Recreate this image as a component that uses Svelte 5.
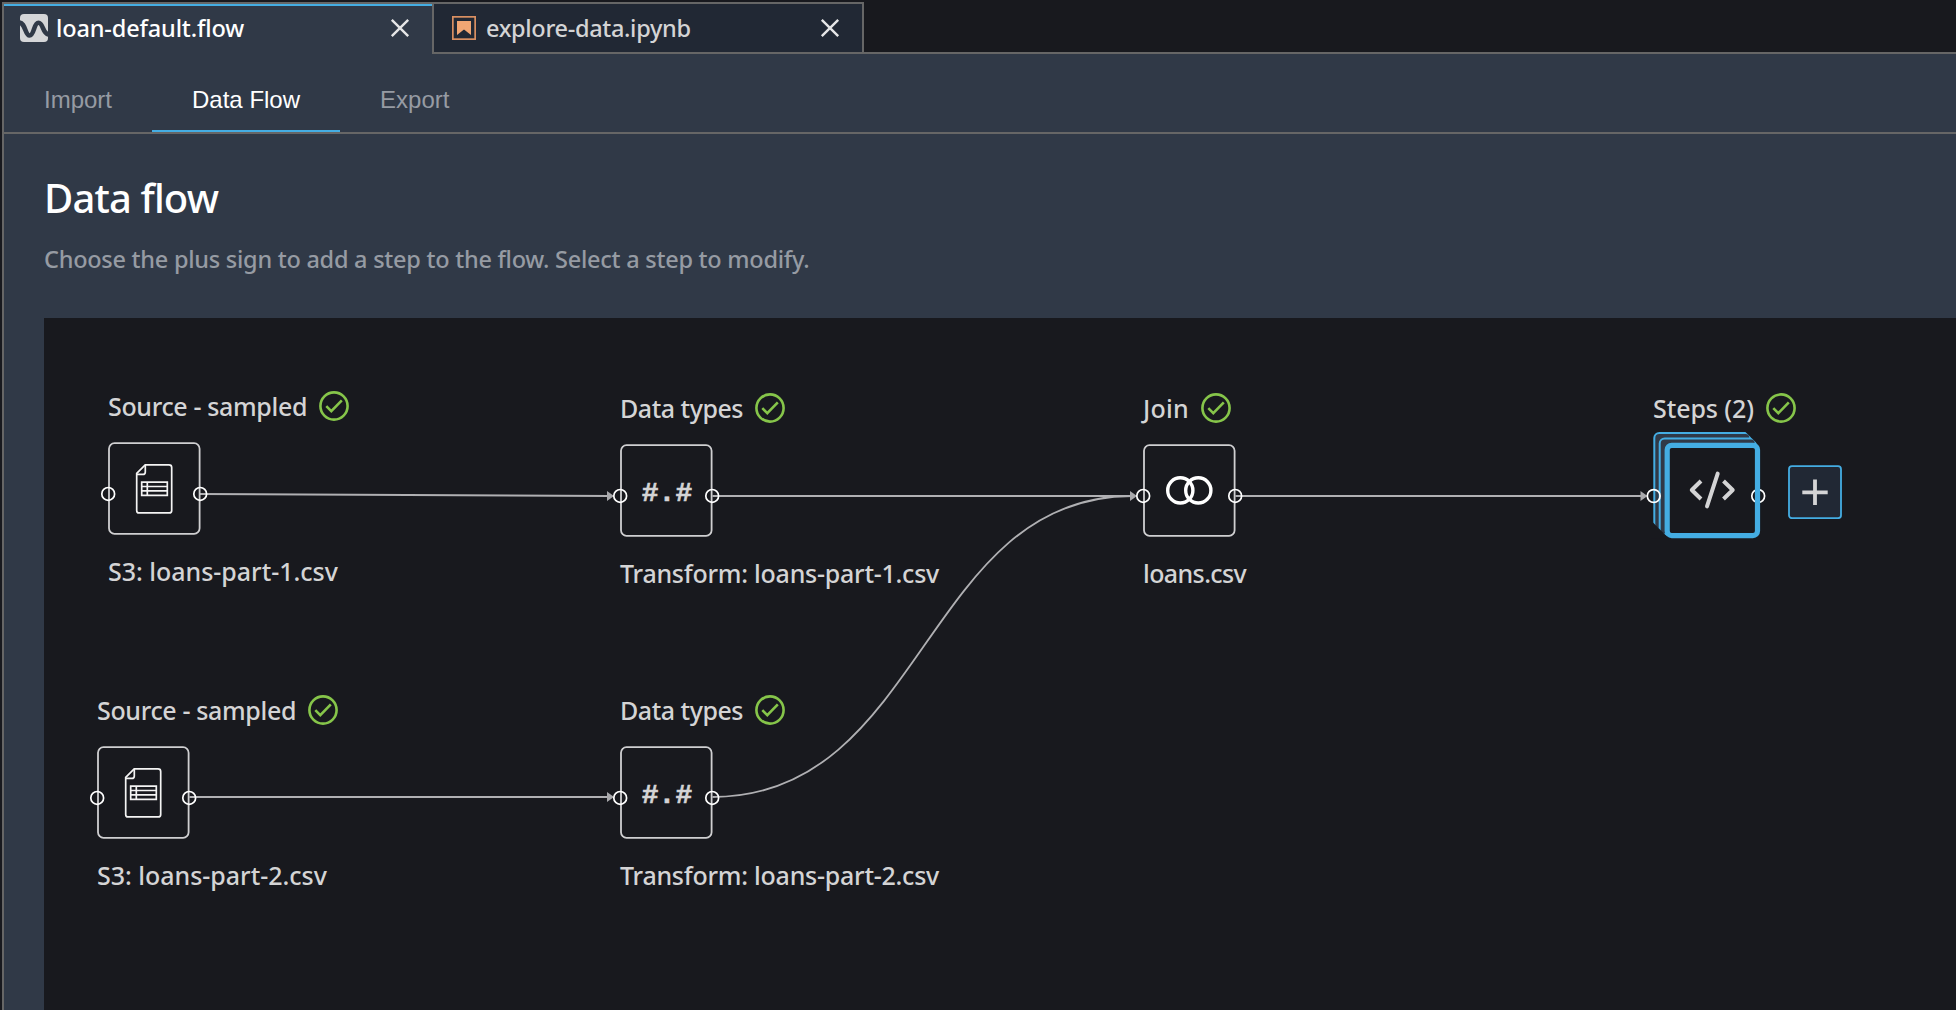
<script>
  // Node positions are the top-left corner of each node's box on the canvas.
  const nodes = [
    { x: 64, y: 124, kind: 'source', title: 'Source - sampled', ts: -0.35, caption: 'S3: loans-part-1.csv', cs: -0.02 },
    { x: 576, y: 126, kind: 'types', title: 'Data types', ts: -0.47, caption: 'Transform: loans-part-1.csv', cs: -0.245 },
    { x: 1099, y: 126, kind: 'join', title: 'Join', ts: 0.25, caption: 'loans.csv', cs: -0.6 },
    { x: 1609, y: 126, kind: 'steps', title: 'Steps (2)', ts: -0.08, caption: '', cs: 0 },
    { x: 53, y: 428, kind: 'source', title: 'Source - sampled', ts: -0.35, caption: 'S3: loans-part-2.csv', cs: -0.02 },
    { x: 576, y: 428, kind: 'types', title: 'Data types', ts: -0.47, caption: 'Transform: loans-part-2.csv', cs: -0.245 }
  ];
  const edges = [
    'M156 176L566 178',
    'M668.5 178H1088',
    'M668.5 479C880 479 880 178 1088 178',
    'M1191.5 178H1598',
    'M145.5 479H566'
  ];
  const arrows = [[570, 178], [1093, 178], [1603.5, 178], [570, 479]];
  const tabs = ['Import', 'Data Flow', 'Export'];
</script>

{#snippet close()}
  <svg class="close" width="20" height="20" viewBox="0 0 20 20"><path d="M1.8 1.8L18.2 18.2M18.2 1.8L1.8 18.2" /></svg>
{/snippet}

<div class="app">
  <header class="files">
    <div class="file active">
      <svg width="28" height="28" viewBox="0 0 28 28">
        <rect width="28" height="28" rx="4" fill="#d5d6d8" />
        <path d="M-1 8.5C5.5 8.5 5 21.5 9.5 21.5C14.5 21.5 13.5 8.8 18.5 8.8C23.5 8.8 22.5 20.5 29 20.5" fill="none" stroke="#303947" stroke-width="4.6" />
      </svg>
      <span class="name flow">loan-default.flow</span>
      {@render close()}
    </div>
    <div class="file">
      <svg class="nb" width="24" height="24" viewBox="0 0 24 24">
        <rect x="0.8" y="0.8" width="22.4" height="22.4" fill="none" stroke="#d98f62" stroke-width="1.8" />
        <path d="M5 5H19V19L12 13.5L5 19Z" fill="#f2a673" />
      </svg>
      <span class="name note">explore-data.ipynb</span>
      {@render close()}
    </div>
    <div class="rest"></div>
  </header>

  <main>
    <nav>
      {#each tabs as tab}
        <button class:selected={tab === 'Data Flow'}>{tab}</button>
      {/each}
    </nav>
    <h1>Data flow</h1>
    <p>Choose the plus sign to add a step to the flow. Select a step to modify.</p>

    <section class="canvas">
      <svg class="edges" width="1912" height="692" viewBox="0 0 1912 692">
        {#each edges as d}<path {d} />{/each}
        {#each arrows as [x, y]}<path class="head" d="M{x} {y}l-7 -5v10z" />{/each}
      </svg>

      {#each nodes as n}
        <div class="node" style:left="{n.x}px" style:top="{n.y - 52}px">
          <div class="title">
            <span style:letter-spacing="{n.ts}px">{n.title}</span>
            <svg class="check" width="30" height="30" viewBox="0 0 30 30">
              <circle cx="15" cy="15" r="13.6" /><path d="M7.3 15.2L12.3 20.2L22.8 9.3" />
            </svg>
          </div>

          <svg class="box {n.kind}" width="92" height="92" viewBox="0 0 92 92">
            {#if n.kind === 'steps'}
              <rect class="layer" x="1.3" y="-11" width="96" height="96" rx="5" />
              <rect class="layer" x="6.7" y="-5.5" width="96" height="96" rx="5" />
              <path class="mask" d="M90.5 -14L112 7.5V-14ZM-2 76.5L16 94.5H-2Z" />
              <rect class="fill" x="14" y="1" width="90" height="90" rx="4" />
              <circle class="port" cx="0.7" cy="52" r="6.4" />
              <circle class="port" cx="105.2" cy="52" r="6.4" />
              <rect class="front" x="14.2" y="1.3" width="90.3" height="90.3" rx="4.5" />
              <path class="code" d="M48 37L38.8 46L48 55M70.5 37L79.7 46L70.5 55" />
              <path class="code round" d="M64.7 29.6L54 62.4" />
            {:else}
              <rect class="frame" x="1" y="1.2" width="90.6" height="90.6" rx="5.5" />
              {#if n.kind === 'source'}
                <g class="doc">
                  <path d="M37.2 22.9H61Q63.7 22.9 63.7 25.4V68.4Q63.7 70.9 61.2 70.9H31Q28.7 70.9 28.7 68.4V31.4Z" />
                  <path d="M37.3 22.9V29.9Q37.3 32.4 34.8 32.4H28.7" />
                  <path d="M33.7 40.1H59.3V53.4H33.7ZM33.7 44.5H59.3M33.7 48.9H59.3M39.3 40.1V53.4" />
                </g>
              {:else if n.kind === 'types'}
                <text x="47" y="56.7" text-anchor="middle">#.#</text>
              {:else}
                <circle class="ring" cx="37.3" cy="46.4" r="12.6" />
                <circle class="ring" cx="55.3" cy="46.4" r="12.6" />
              {/if}
              <circle class="port" cx="0.2" cy="51.9" r="6.4" />
              <circle class="port" cx="92.2" cy="51.9" r="6.4" />
            {/if}
          </svg>
          <div class="caption" style:letter-spacing="{n.cs}px">{n.caption}</div>
        </div>
      {/each}

      <button class="add" aria-label="Add step">
        <svg width="54" height="54" viewBox="0 0 54 54">
          <rect x="1" y="1.2" width="52" height="52" rx="3" /><path d="M14.3 27.3H39.7M27 14.6V40" />
        </svg>
      </button>
    </section>
  </main>
</div>

<style>
  :global(body) { background: #18191e; overflow: hidden; }
  .app {
    box-sizing: border-box;
    width: 1956px; height: 1010px;
    padding: 2px 0 0 2px;
    overflow: hidden;
    display: flex; flex-direction: column;
    font-family: "Noto Sans", sans-serif;
    font-weight: 500;
    color: #d4d4d5;
    background: #18191e;
  }
  .files { display: flex; height: 52px; flex: none; }
  .file {
    box-sizing: border-box;
    width: 430px; height: 52px;
    display: flex; align-items: center;
    padding: 0 22px 0 18px;
    border: 2px solid #666;
    border-left: 0;
    background: #212834;
  }
  .file.active {
    width: 432px;
    padding: 0 22px 2px 16px;
    border-bottom: 0;
    border-left: 2px solid #666;
    background: #303947;
    box-shadow: inset 0 2px #44ade3;
  }
  .file svg { flex: none; }
  .name { flex: 1; font-size: 23.5px; line-height: 32px; white-space: nowrap; }
  .flow { margin-left: 8px; letter-spacing: -0.14px; color: #fff; }
  .note { margin-left: 10px; letter-spacing: -0.33px; }
  .close path { fill: none; stroke: #e6e6e7; stroke-width: 2.4; }
  .rest { flex: 1; border-bottom: 2px solid #666; }
  main { flex: 1; background: #303947; border-left: 2px solid #666; display: flex; flex-direction: column; }
  nav { display: flex; height: 78px; flex: none; border-bottom: 2px solid #666; }
  nav button {
    border: 0; margin: 0; padding: 30px 40px 0; background: none;
    font: 24px/32px "Liberation Sans", Arial, sans-serif;
    color: #969ba3;
    display: flex; align-items: flex-start;
  }
  nav .selected { color: #fff; box-shadow: inset 0 -2px #44ade3; }
  h1 { margin: 39px 0 0 40px; font-size: 40px; line-height: 50px; font-weight: 500; letter-spacing: -0.85px; color: #fff; }
  p { margin: 20px 0 0 40px; font-size: 23.5px; line-height: 32px; letter-spacing: -0.255px; color: #969ba3; }
  .canvas { position: relative; margin: 43px 0 0 40px; flex: 1; background: #18191e; overflow: hidden; }
  .edges { display: block; }
  .edges path { fill: none; stroke: #b0b0b3; stroke-width: 1.8; }
  .edges .head { fill: #a9a9ac; stroke: none; }
  .node { position: absolute; display: flex; flex-direction: column; gap: 20px; }
  .title { display: flex; align-items: center; gap: 12px; height: 32px; }
  .title, .caption { font-size: 25px; line-height: 32px; white-space: nowrap; }
  .caption { padding-top: 1px; }
  .check { fill: none; stroke: #86c54a; stroke-width: 2.6; flex: none; }
  .box { overflow: visible; display: block; }
  .frame { fill: #18191e; stroke: #cfcfd1; stroke-width: 1.8; }
  .port { fill: none; stroke: #fff; stroke-width: 1.7; }
  .doc { fill: none; stroke: #f4f4f4; stroke-width: 1.7; }
  .ring { fill: none; stroke: #fff; stroke-width: 3.4; }
  text { font: 700 28px "Liberation Mono", monospace; fill: #d4d4d5; stroke: #d4d4d5; stroke-width: 0.6; }
  .layer { fill: #303947; stroke: #44ade3; stroke-width: 2; }
  .mask, .fill { fill: #18191e; }
  .front { fill: none; stroke: #44ade3; stroke-width: 5.2; }
  .code { fill: none; stroke: #d4d4d5; stroke-width: 4; stroke-linejoin: round; }
  .round { stroke-linecap: round; }
  .add { position: absolute; left: 1744px; top: 147px; padding: 0; border: 0; background: none; }
  .add svg { display: block; }
  .add rect { fill: #212834; stroke: #44ade3; stroke-width: 1.8; }
  .add path { stroke: #d4d4d5; stroke-width: 3.8; }
</style>
